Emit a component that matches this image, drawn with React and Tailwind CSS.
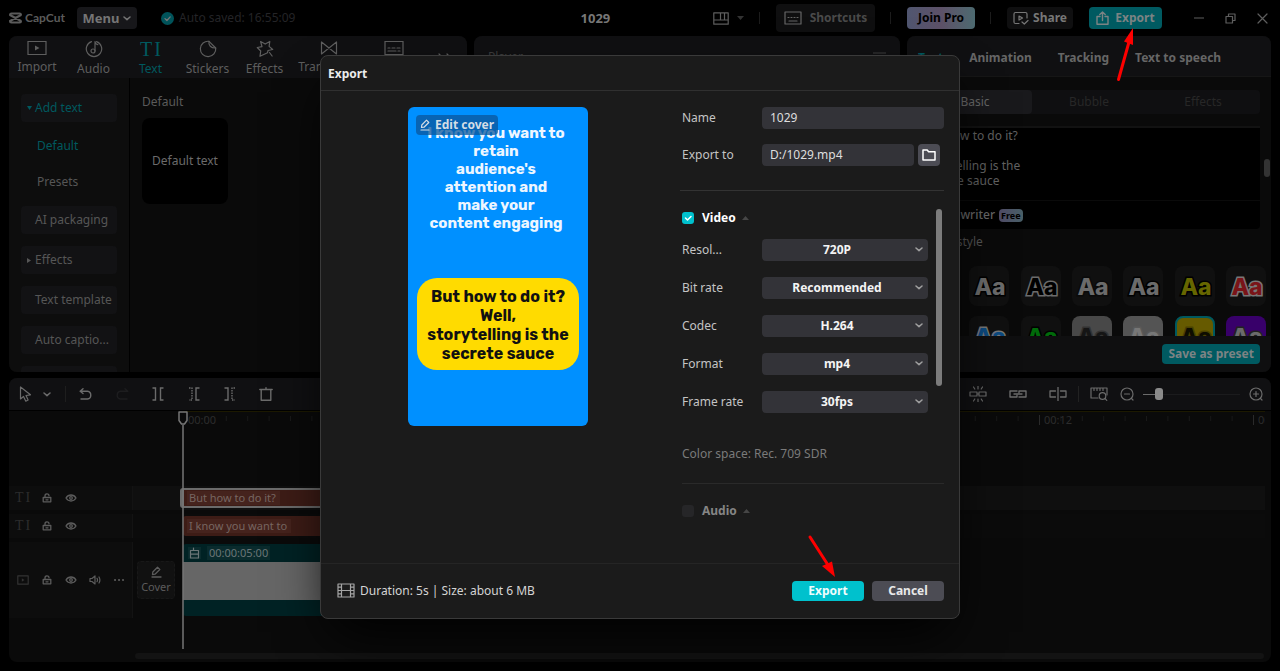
import React from "react";

function Svg({ w, h, className = "", children, sw = 1.2 }) {
  return (
    <svg
      width={w}
      height={h}
      viewBox={`0 0 ${w} ${h}`}
      fill="none"
      stroke="currentColor"
      strokeWidth={sw}
      strokeLinejoin="round"
      strokeLinecap="round"
      className={"shrink-0 " + className}
      aria-hidden="true"
    >
      {children}
    </svg>
  );
}

const ChevronDown = ({ className }) => (
  <Svg w={8} h={5} sw={1.5} className={className}>
    <path d="M1 1 4 3.6 7 1" />
  </Svg>
);

const Glyph = ({ className = "" }) => (
  <span className={"flex gap-0.5 font-['Liberation_Serif',serif] leading-none " + className}>
    <span>T</span>
    <span>I</span>
  </span>
);

const icons = {
  import: (
    <Svg w={20} h={16}>
      <path d="M1 1.5h18v13H1z" strokeLinejoin="miter" />
      <path d="M8 5.5 12.5 8 8 10.5z" fill="currentColor" stroke="none" />
    </Svg>
  ),
  audio: (
    <Svg w={18} h={18}>
      <path d="M6.5 1.6a7.7 7.7 0 1 0 5 0" />
      <circle cx="8" cy="11" r="2" />
      <path d="M10 11V1.5c.2 2 1.2 3 2.8 3.2" />
    </Svg>
  ),
  stickers: (
    <Svg w={18} h={18}>
      <path d="M10 1.3A7.7 7.7 0 1 0 16.7 8L10 1.3z" />
      <path d="M10 1.3c-.8 4 2 7 6.7 6.7" />
    </Svg>
  ),
  effects: (
    <Svg w={18} h={18}>
      <path d="M11.500 12.800 8.300 14.200 4 16.300 4.700 11 1.300 7.500 6 6.600 4.600 1.500 9.200 4.100 13.800 1.500 13.100 6.400 16.700 9.500 12 10.500z" />
      <path d="m13.500 12.500 2.600 3.500" />
    </Svg>
  ),
  transitions: (
    <Svg w={18} h={16}>
      <path d="M1.500 2v12L16.500 2v12L1.500 2z" />
    </Svg>
  ),
  captions: (
    <Svg w={20} h={16}>
      <path d="M1 1.500h18v13H1z" strokeLinejoin="miter" />
      <path d="M4 8h2M8 8h3M13 8h3M4 11h8M14 11h2" />
    </Svg>
  ),
};

const Lock = () => (
  <Svg w={10} h={10} sw={1.3}>
    <path d="M1.200 4.500h7.600v4.300H1.200zM3 4.500V3a2 2 0 0 1 4-.3M4 6.800h2" />
  </Svg>
);
const Eye = () => (
  <Svg w={12} h={10} sw={1.3}>
    <path d="M1 5c2.500-4 7.500-4 10 0-2.500 4-7.500 4-10 0z" />
    <circle cx="6" cy="5" r="1.300" />
  </Svg>
);
const Speaker = () => (
  <Svg w={12} h={10} sw={1.2}>
    <path d="M1 3.500h2L6 1v8L3 6.500H1zM8 3.300q1 1.700 0 3.400M10 2q1.800 3 0 6" />
  </Svg>
);

function IconButton({ label, children, className = "" }) {
  return (
    <button type="button" aria-label={label} className={"flex items-center justify-center " + className}>
      {children}
    </button>
  );
}

const Divider = () => <span className="mr-4 ml-[15px] h-3 w-px bg-[#1c1c1c]" />;

function TopBar() {
  return (
    <header className="flex h-9 shrink-0 items-center bg-black pr-3 pl-[9px]">
      <div className="flex basis-[45%] items-center">
        <Svg w={13} h={12} sw={2} className="text-[#5b5b5b]">
          <path d="M12 3.500V3Q12 1.500 10.500 1.500h-8Q1 1.500 1 3l11 6M12 8.500V9q0 1.500-1.500 1.500h-8Q1 10.500 1 9l11-6" strokeLinecap="butt" />
        </Svg>
        <span className="ml-[3px] w-[38px] font-['Lato',sans-serif] text-[12px] font-bold text-[#5b5b5b]">CapCut</span>
        <button type="button" className="ml-3.5 flex h-[22px] w-[60px] items-center justify-center gap-1 rounded bg-[#17171a] text-[13px] font-bold text-[#757575]">
          Menu
          <ChevronDown />
        </button>
        <Svg w={13} h={13} sw={1.3} className="ml-6 text-[#777]">
          <circle cx="6.500" cy="6.500" r="6.500" fill="#00535a" stroke="none" />
          <path d="m4 6.600 1.900 1.900 3.300-3.600" />
        </Svg>
        <span className="ml-[5px] text-[#242427]">Auto saved: 16:55:09</span>
      </div>
      <h1 className="pl-[5px] text-[13px] font-bold text-[#777]">1029</h1>
      <div className="ml-auto flex items-center text-[#5e5e5e]">
        <IconButton label="Layout" className="gap-2">
          <Svg w={16} h={13}>
            <path d="M.8.800h14.400v11.400H.8zM.8 8h14.400M7.500.800V8M11.500.800V8" />
          </Svg>
          <Svg w={7} h={4} className="text-[#333]">
            <path d="M0 0h7L3.500 4z" fill="currentColor" stroke="none" />
          </Svg>
        </IconButton>
        <Divider />
        <button type="button" className="flex h-7 w-[99px] items-center justify-center gap-2 rounded bg-[#0f0f10] font-bold text-[#4a4a4a]">
          <Svg w={18} h={14} className="text-[#666]">
            <path d="M1 1h16v12H1zM4 6.500h1M7 6.500h1M10 6.500h1M13 6.500h1M5 10h8" />
          </Svg>
          Shortcuts
        </button>
        <Divider />
        <button type="button" className="h-[22px] w-[68px] rounded bg-linear-to-r from-[#505670] via-[#5d5168] to-[#4c6a70] font-bold text-black">
          Join Pro
        </button>
        <Divider />
        <button type="button" className="flex h-[22px] w-[66px] items-center justify-center gap-1 rounded bg-[#0f0f10] font-bold text-[#777]">
          <Svg w={16} h={14}>
            <path d="M6 12.500H2.500Q1 12.500 1 11V3q0-1.500 1.500-1.500h10Q14 1.500 14 3v4M6 5l3.500 2L6 9zM9 11l2.300 2L15 9.500" />
          </Svg>
          Share
        </button>
        <div className="relative ml-4">
          <button type="button" className="flex h-[22px] w-[73px] items-center justify-center gap-1.5 rounded bg-[#005a61] font-bold text-[#7c8384]">
            <Svg w={13} h={14} sw={1.4}>
              <path d="M4 5.500H1v7.700h11V5.500H9M6.500 9.500V1M3.800 3.500 6.500.900l2.700 2.600" />
            </Svg>
            Export
          </button>
          <svg width="20" height="56" viewBox="0 0 20 56" className="absolute top-5 left-[26px] z-10" aria-hidden="true">
            <path d="M3.500 52.500 14 15" stroke="#fe0000" strokeWidth="3" strokeLinecap="round" />
            <path d="M18 1 18 18 9 14.500z" fill="#fe0000" />
          </svg>
        </div>
        <IconButton label="Minimise" className="ml-8">
          <Svg w={10} h={10}>
            <path d="M0 5h10" />
          </Svg>
        </IconButton>
        <IconButton label="Restore" className="ml-[21px]">
          <Svg w={11} h={11}>
            <path d="M1 3.500h6.500V10H1zM3.500 3.300V1H10v6.500H7.700" />
          </Svg>
        </IconButton>
        <IconButton label="Close" className="ml-[21px]">
          <Svg w={11} h={11}>
            <path d="m1 1 9 9M10 1l-9 9" />
          </Svg>
        </IconButton>
      </div>
    </header>
  );
}

const tabs = [
  ["Import", "import"],
  ["Audio", "audio"],
  ["Text", "text"],
  ["Stickers", "stickers"],
  ["Effects", "effects"],
  ["Transitions", "transitions"],
  ["Captions", "captions"],
];

function MediaPanel() {
  const box = "mb-3 flex h-7 shrink-0 items-center rounded bg-[#121214] pl-3.5 text-left relative";
  return (
    <section className="flex min-h-0 w-[458px] shrink-0 flex-col overflow-hidden rounded-lg bg-[#0a0a0a]">
      <nav className="flex h-[42px] shrink-0 bg-[#101012]">
        {tabs.map(([name, icon]) => (
          <button
            key={name}
            type="button"
            className={
              "flex shrink-0 flex-col items-center pt-1 " +
              (name === "Transitions" ? "w-[72px] " : name === "Import" ? "w-14 " : "w-[57px] ") +
              (name === "Text" ? "text-[#00595f]" : "text-[#5e5e5e]")
            }
          >
            <span className="flex h-[18px] items-center">{icons[icon] || <Glyph className="text-[20px]" />}</span>
            <span className="leading-[22px]">{name}</span>
          </button>
        ))}
        <IconButton label="More" className="ml-4 text-[#5e5e5e]">
          <Svg w={14} h={8}>
            <path d="m1 1 3 3-3 3M9 1l3 3-3 3" />
          </Svg>
        </IconButton>
      </nav>
      <div className="flex min-h-0 flex-1">
        <div className="flex w-[121px] shrink-0 flex-col overflow-hidden border-r border-black bg-[#0d0d0d] pt-4 pr-3 pl-3 text-[#565656]">
          <button type="button" className="relative mb-1.5 flex h-7 shrink-0 items-center rounded bg-[#121214] pl-3.5 text-[#00595f]">
            <Svg w={5} h={4} className="absolute left-1.5">
              <path d="M0 0h5L2.500 4z" fill="currentColor" stroke="none" />
            </Svg>
            Add text
          </button>
          <button type="button" className="h-9 shrink-0 pl-4 text-left text-[#00595f]">Default</button>
          <button type="button" className="mb-1.5 h-9 shrink-0 pl-4 text-left">Presets</button>
          <button type="button" className={box}>AI packaging</button>
          <button type="button" className={box}>
            <Svg w={4} h={5} className="absolute left-1.5">
              <path d="M0 0v5l4-2.500z" fill="currentColor" stroke="none" />
            </Svg>
            Effects
          </button>
          <button type="button" className={box + " whitespace-nowrap"}>Text template</button>
          <button type="button" className={box}>Auto captio...</button>
          <span className={box} />
        </div>
        <div className="flex-1 pt-3.5 pl-3 text-[#5a5a5a]">
          <h2 className="leading-5">Default</h2>
          <button type="button" className="mt-1.5 flex h-[86px] w-[86px] items-center justify-center rounded-lg bg-black whitespace-nowrap text-[#6b6b6b]">
            Default text
          </button>
        </div>
      </div>
    </section>
  );
}

const swatches = [
  ["bg-[#101010]", "#6b6b6b", "#000"],
  ["bg-[#101010]", "#6b6b6b", "#000"],
  ["bg-[#101010]", "#000", "#6b6b6b"],
  ["bg-[#101010]", "#6b6b6b", "#0a0a0a"],
  ["bg-[#101010]", "#6b6b6b", "#000"],
  ["bg-[#101010]", "#666600", "#000"],
  ["bg-[#101010]", "#7a1418", "#777"],
  ["bg-[#101010]", "#6b6b6b", "#000"],
  ["bg-[#101010]", "#0c4a80", "#777"],
  ["bg-[#101010]", "#006a0a", "#000"],
  ["bg-[#484848]", "#151515", "#333"],
  ["bg-[#545454]", "#777", "#5a5a5a"],
  ["bg-[#665a00] border-2 border-[#00595f]", "#0d0c00", "#4a4200"],
  ["bg-[#38006a]", "#6b6b6b", "#222"],
];

function TextPanel() {
  return (
    <section className="flex min-h-0 w-[364px] shrink-0 flex-col overflow-hidden rounded-lg bg-[#0a0a0a] text-[#666]">
      <nav className="flex h-[41px] shrink-0 items-center gap-[26px] border-b border-[#161616] bg-[#101012] pt-1 pl-[11px] font-bold whitespace-nowrap">
        <button type="button" className="text-[#00595f]">Text</button>
        <button type="button">Animation</button>
        <button type="button">Tracking</button>
        <button type="button">Text to speech</button>
      </nav>
      <div className="relative min-h-0 flex-1 overflow-hidden pr-[11px] pl-[11px]">
        <div className="mt-[13px] flex h-6 rounded bg-[#0f0f11] text-[#272727]">
          <button type="button" className="flex-1 rounded bg-[#19191c] text-[#666]">Basic</button>
          <button type="button" className="flex-1">Bubble</button>
          <button type="button" className="flex-1">Effects</button>
        </div>
        <textarea
          aria-label="Text content"
          className="mt-3 block h-[74px] w-full resize-none overflow-hidden border-t-2 border-[#121212] bg-black pl-[5px] leading-[15px] text-[#626262] outline-none"
          defaultValue={"But how to do it?\nWell,\nstorytelling is the\nsecrete sauce"}
        />
        <div className="mt-px flex h-7 items-center rounded-b bg-black pl-4">
          <span className="w-[61px] text-right font-medium">AI writer</span>
          <span className="ml-1 rounded bg-linear-to-r from-[#4f4b66] to-[#496068] px-0.5 text-[9px] leading-[13px] font-bold text-black">Free</span>
        </div>
        <h3 className="mt-[3px] leading-5 text-[#555]">Preset style</h3>
        <div className="mt-3.5 -mr-1.5 grid grid-cols-[repeat(7,40px)] justify-between gap-y-2.5">
          {swatches.map(([bg, fill, line], i) => (
            <button key={i} type="button" aria-label={"Preset " + (i + 1)} className={"flex h-10 w-10 items-center justify-center overflow-hidden rounded-lg " + bg}>
              <svg width="40" height="26" viewBox="0 0 40 26" className="shrink-0" aria-hidden="true">
                <text x="21" y="22" textAnchor="middle" className="font-['Inter',sans-serif] text-[23px] font-extrabold" fill={fill} stroke={line} strokeWidth="3" paintOrder="stroke" strokeLinejoin="miter">
                  Aa
                </text>
              </svg>
            </button>
          ))}
        </div>
        <span className="absolute top-[82px] right-[1px] h-[18px] w-1.5 rounded-full bg-[#333]" />
      </div>
      <div className="flex h-9 shrink-0 items-center justify-end bg-[#0f0f10] pr-[11px]">
        <button type="button" className="h-5 rounded bg-[#005a61] px-1.5 font-bold text-[#7c8384]">Save as preset</button>
      </div>
    </section>
  );
}

function Toolbar() {
  return (
    <div className="flex h-8 shrink-0 items-center bg-[#101012] pr-2 pl-2.5 text-[#6b6b6b]">
      <IconButton label="Select" className="w-3">
        <Svg w={13} h={16}>
          <path d="M1.500 1v12l3-2.500 2.300 4.700 2.300-1.200L7 9.500l4.500-.7z" />
        </Svg>
      </IconButton>
      <IconButton label="Select options" className="ml-3">
        <ChevronDown />
      </IconButton>
      <span className="mr-0.5 ml-3.5 h-4 w-px bg-[#1e1e1e]" />
      <div className="flex">
        <IconButton label="Undo" className="h-8 w-9">
          <Svg w={14} h={12} sw={1.4}>
            <path d="M4 .800 1.200 3.300H8.500a3.900 3.900 0 0 1 0 7.700H2M1.200 3.300 4 5.500" />
          </Svg>
        </IconButton>
        <IconButton label="Redo" className="h-8 w-9 text-[#1d1d1f]">
          <Svg w={14} h={12} sw={1.4}>
            <path d="m10 .800 2.800 2.500H5.500a3.900 3.900 0 0 0 0 7.700H12" />
          </Svg>
        </IconButton>
        <IconButton label="Split" className="h-8 w-9">
          <Svg w={12} h={14} sw={1.4}>
            <path d="M1 1h2.500v12H1M11 1H8.500v12H11" strokeLinejoin="miter" />
          </Svg>
        </IconButton>
        <IconButton label="Delete left" className="h-8 w-9">
          <Svg w={12} h={14} sw={1.4}>
            <path d="M1 1h3v12H1" strokeDasharray="1.500 1" strokeLinecap="butt" />
            <path d="M11 1H8v12h3" strokeLinejoin="miter" />
          </Svg>
        </IconButton>
        <IconButton label="Delete right" className="h-8 w-9">
          <Svg w={12} h={14} sw={1.4}>
            <path d="M11 1H8v12h3" strokeDasharray="1.500 1" strokeLinecap="butt" />
            <path d="M1 1h3v12H1" strokeLinejoin="miter" />
          </Svg>
        </IconButton>
        <IconButton label="Delete" className="h-8 w-9">
          <Svg w={14} h={14} sw={1.4}>
            <path d="M.8 2.500h12.400M2.200 2.500v10.700h9.600V2.500M7 .800v1.500" />
          </Svg>
        </IconButton>
      </div>
      <div className="ml-auto flex items-center">
        <IconButton label="Magnet" className="w-10">
          <Svg w={18} h={16}>
            <path d="M8 6H1v4h7zM10 6h7v4h-7zM8 8h2M9 0v3M9 13v3M4.500 1l1.300 2M13.500 1l-1.300 2M4.500 15l1.300-2M13.500 15l-1.300-2" />
          </Svg>
        </IconButton>
        <IconButton label="Link" className="w-10">
          <Svg w={18} h={8} sw={1.4}>
            <path d="M8 1H1v6h7V5.500M10 7h7V1h-7v1.500M5 4h8" />
          </Svg>
        </IconButton>
        <IconButton label="Preview axis" className="w-10">
          <Svg w={18} h={14} sw={1.3}>
            <path d="M6.500 4H1v6h5.500M11.500 4H17v6h-5.500M9 0v14" />
          </Svg>
        </IconButton>
        <span className="h-4 w-px bg-[#222]" />
        <IconButton label="Fit timeline" className="ml-[11px]">
          <Svg w={18} h={14}>
            <path d="M8 11H1V1h16v7M4 1v2.500M7 1v2.500M10 1v2.500M13 1v2.500" />
            <circle cx="12.500" cy="9" r="3.300" />
            <path d="m15 11.500 1.800 1.800" />
          </Svg>
        </IconButton>
        <IconButton label="Zoom out" className="ml-3">
          <Svg w={14} h={14}>
            <circle cx="7" cy="7" r="6" />
            <path d="M4.500 7h5M11.500 11.500 13 13" />
          </Svg>
        </IconButton>
        <input
          type="range"
          aria-label="Timeline zoom"
          defaultValue="13"
          className="mx-[9px] h-3 w-[97px] appearance-none bg-transparent [&::-webkit-slider-runnable-track]:h-px [&::-webkit-slider-runnable-track]:bg-linear-to-r [&::-webkit-slider-runnable-track]:from-[#6b6b6b] [&::-webkit-slider-runnable-track]:from-15% [&::-webkit-slider-runnable-track]:to-[#1b1b1d] [&::-webkit-slider-runnable-track]:to-15% [&::-webkit-slider-thumb]:-mt-1.5 [&::-webkit-slider-thumb]:h-3 [&::-webkit-slider-thumb]:w-2 [&::-webkit-slider-thumb]:appearance-none [&::-webkit-slider-thumb]:rounded-[3px] [&::-webkit-slider-thumb]:bg-[#8a8a8a]"
        />
        <IconButton label="Zoom in">
          <Svg w={14} h={14}>
            <circle cx="7" cy="7" r="6" />
            <path d="M4.500 7h5M7 4.500v5M11.500 11.500 13 13" />
          </Svg>
        </IconButton>
      </div>
    </div>
  );
}

function Ruler() {
  return (
    <svg width="100%" height="18" className="block overflow-hidden text-[11px]" aria-hidden="true">
      {Array.from({ length: 51 }, (_, i) => (
        <path key={i} d={i % 10 ? `M${0.5 + i * 21.4} 4v5` : `M${0.5 + i * 21.4} 3v10`} stroke={i % 10 ? "#191919" : "#2a2a2a"} />
      ))}
      {["00:00", "00:03", "00:06", "00:09", "00:12", "00:15"].map((t, i) => (
        <text key={t} x={5 + i * 214} y="12" fill="#2c2c2c">
          {t}
        </text>
      ))}
    </svg>
  );
}

function Timeline() {
  const head = "flex w-[124px] shrink-0 items-center gap-2 border-r border-[#131313] bg-[#0d0d0d] pl-1.5 text-[#5c5c5c]";
  const icon = "flex w-4 justify-center";
  return (
    <section className="flex min-h-0 flex-[284] basis-0 flex-col overflow-hidden rounded-lg bg-[#0a0a0a]">
      <Toolbar />
      <div className="relative flex flex-1 flex-col border-t border-black">
        <div className="mr-1.5 ml-[174px] h-[75px] border-t border-[#1c1900]">
          <Ruler />
        </div>
        <div className="flex h-6">
          <div className={head}>
            <Glyph className="w-4 text-[14px] text-[#2c2c2c]" />
            <span className={icon}><Lock /></span>
            <span className={icon}><Eye /></span>
          </div>
          <div className="mr-1.5 flex flex-1 items-center bg-[#0f0f0f] pl-[47px]">
            <div className="flex h-5 w-[360px] items-center rounded-[3px] border-2 border-l-4 border-[#6b6b6b] bg-[#3d1c16] pl-[3px] text-[11px]">
              <span className="bg-[#45231d] pr-1 pl-0.5 leading-[14px] text-[#776661]">But how to do it?</span>
            </div>
          </div>
        </div>
        <div className="mt-1 flex h-6">
          <div className={head}>
            <Glyph className="w-4 text-[14px] text-[#2c2c2c]" />
            <span className={icon}><Lock /></span>
            <span className={icon}><Eye /></span>
          </div>
          <div className="mr-1.5 flex flex-1 items-center bg-[#0b0b0b] pl-[50px]">
            <div className="flex h-5 w-[357px] items-center rounded-[3px] bg-[#3d1c16] pl-1 text-[11px]">
              <span className="bg-[#45231d] pr-1 pl-0.5 leading-[14px] text-[#776661]">I know you want to</span>
            </div>
          </div>
        </div>
        <div className="mt-1 flex h-[76px]">
          <div className={head}>
            <span className="flex w-4 justify-center text-[#333]">
              <Svg w={12} h={10}>
                <path d="M.8.800h10.400v8.400H.8z" />
                <path d="M4.800 3.300 7.500 5 4.800 6.700z" fill="currentColor" stroke="none" />
              </Svg>
            </span>
            <span className={icon}><Lock /></span>
            <span className={icon}><Eye /></span>
            <span className={icon}><Speaker /></span>
            <span className={icon}>
              <Svg w={10} h={2} sw={2}>
                <path d="M1 1h.1M5 1h.1M9 1h.1" />
              </Svg>
            </span>
          </div>
          <div className="mr-1.5 flex flex-1 items-center pl-1">
            <button type="button" className="mr-2 flex h-[38px] w-[38px] shrink-0 flex-col items-center justify-center gap-0.5 rounded border border-dashed border-[#181818] bg-[#111] text-[11px] leading-[14px] text-[#5c5c5c]">
              <Svg w={11} h={12} sw={1.3}>
                <path d="M1.500 8.500 1.800 6 6.500 1.200 8.800 3.500 4 8.200zM1 11h9" />
              </Svg>
              Cover
            </button>
            <div className="w-[357px] overflow-hidden rounded-[3px] bg-[#002224]">
              <div className="flex h-[18px] items-center gap-1.5 pl-[5px] text-[11px] leading-[14px] text-[#6b7677]">
                <Svg w={13} h={12} className="bg-[#0a2b2d]">
                  <path d="M2.500 3.500h8V11h-8zM2.500 7.200h8M5.500 3.500V1.200" />
                </Svg>
                <span className="bg-[#0a2b2d] px-0.5">00:00:05:00</span>
              </div>
              <div className="h-[38px] bg-[#666]" />
              <div className="h-4" />
            </div>
          </div>
        </div>
        <div className="mt-auto mr-[7px] mb-[3px] ml-[126px] h-1.5 rounded-full bg-[#131313]" />
        <svg width="12" height="239" viewBox="0 0 12 239" className="absolute top-0 left-[168px]" fill="none" stroke="#767676" aria-hidden="true">
          <path d="M6 14v224" strokeWidth="1.500" />
          <path d="M2 1h8v8.500L7.500 13h-3L2 9.500z" strokeWidth="1.500" fill="#0a0a0a" strokeLinejoin="round" />
        </svg>
      </div>
    </section>
  );
}

const fields = [
  ["resolution", "Resol...", "720P"],
  ["bitrate", "Bit rate", "Recommended"],
  ["codec", "Codec", "H.264"],
  ["format", "Format", "mp4"],
  ["framerate", "Frame rate", "30fps"],
];

function CheckRow({ id, label, checked, className }) {
  return (
    <div className={"flex items-center font-bold " + className}>
      <span className="relative flex h-3 w-3">
        <input id={id} type="checkbox" defaultChecked={checked} className="h-3 w-3 appearance-none rounded-[3px] bg-[#262628] checked:bg-[#00c1cd]" />
        {checked && (
          <Svg w={12} h={12} sw={1.5} className="pointer-events-none absolute inset-0 text-white">
            <path d="m3.500 6 2 2L9 4.500" />
          </Svg>
        )}
      </span>
      <label htmlFor={id} className="ml-2 leading-5">{label}</label>
      <Svg w={7} h={4} className="ml-1.5 text-[#464646]">
        <path d="M0 4h7L3.500 0z" fill="currentColor" stroke="none" />
      </Svg>
    </div>
  );
}

function ExportDialog() {
  return (
    <div role="dialog" aria-labelledby="export-title" className="flex w-[640px] max-w-full flex-col rounded-lg border border-[#3a3a3a] bg-[#1b1b1b] text-[#c4c4c4] shadow-2xl shadow-black">
      <h2 id="export-title" className="flex h-[35px] shrink-0 items-center border-b border-[#303030] pt-0.5 pl-[7px] font-bold text-[#ececec]">Export</h2>
      <div className="flex h-[472px]">
        <div className="flex w-[354px] shrink-0 justify-center pt-4">
          <div className="relative h-[319px] w-[180px] rounded-md bg-[#0090ff] px-2 pt-[17px] text-center font-['Rubik','Inter',sans-serif] font-bold">
            <p className="pr-1 text-[15px] leading-[18px] text-[#edf6ff]">
              I know you want to<br />retain<br />audience's<br />attention and<br />make your<br />content engaging
            </p>
            <p className="mx-px mt-[46px] rounded-[20px] bg-[#ffdb00] pt-[9px] pb-[7px] text-[16px] leading-[19px] whitespace-nowrap text-[#111]">
              But how to do it?<br />Well,<br />storytelling is the<br />secrete sauce
            </p>
            <button type="button" className="absolute top-2 left-2 flex h-5 items-center gap-1 rounded bg-[#0b559b]/75 px-1 font-['Noto_Sans',sans-serif] text-[12px] font-bold text-[#d3dde6]">
              <Svg w={11} h={12}>
                <path d="M1.500 8.500 1.800 6 6.500 1.200 8.800 3.500 4 8.200zM1 11h8" />
              </Svg>
              Edit cover
            </button>
          </div>
        </div>
        <div className="min-w-0 flex-1 pt-4 pr-[15px] pl-[7px]">
          <div className="flex h-[22px] items-center">
            <label htmlFor="name" className="w-20">Name</label>
            <input id="name" type="text" defaultValue="1029" className="h-[22px] min-w-0 flex-1 rounded bg-[#333338] px-2 text-[#dedede] outline-none" />
          </div>
          <div className="mt-[15px] flex h-[22px] items-center pr-1">
            <label htmlFor="path" className="w-20">Export to</label>
            <input id="path" type="text" defaultValue="D:/1029.mp4" className="h-[22px] min-w-0 flex-1 rounded bg-[#333338] px-2 text-[#dedede] outline-none" />
            <IconButton label="Choose folder" className="ml-1 h-[22px] w-[22px] rounded bg-[#4c4c54] text-white">
              <Svg w={14} h={12} sw={1.5}>
                <path d="M1 1h4.200l1.400 1.800H13V11H1z" />
              </Svg>
            </IconButton>
          </div>
          <div className="mt-6 -ml-0.5 border-t border-[#333]" />
          <div className="relative mt-[17px]">
            <CheckRow id="video" label="Video" checked className="text-white" />
            {fields.map(([id, label, value], i) => (
              <div key={id} className={"flex h-[22px] items-center pr-4 " + (i ? "mt-4" : "mt-[11px]")}>
                <label htmlFor={id} className="w-20">{label}</label>
                <span className="relative flex flex-1 items-center">
                  <select id={id} defaultValue={value} className="h-[22px] w-full appearance-none rounded bg-[#333338] pr-4 text-center font-bold text-[#f4f4f4] [text-align-last:center]">
                    <option>{value}</option>
                  </select>
                  <ChevronDown className="pointer-events-none absolute right-[5px] text-[#a0a0a0]" />
                </span>
              </div>
            ))}
            <span className="absolute top-px right-0.5 h-[177px] w-1.5 rounded-full bg-[#7c7c7c]" />
          </div>
          <p className="mt-[31px] leading-5 text-[#7a7a7a]">Color space: Rec. 709 SDR</p>
          <div className="mt-[19px] border-t border-[#2a2a2a]" />
          <CheckRow id="audio" label="Audio" className="mt-[17px] text-[#858585]" />
        </div>
      </div>
      <footer className="flex h-[55px] items-center border-t border-[#252525] pr-[15px] pl-4">
        <Svg w={18} h={15} className="mr-[5px] text-[#a5a5a5]">
          <path d="M1 1h16v13H1zM4.500 1v13M13.500 1v13M4.500 7.500h9M1 4.200h3.500M1 7.500h3.500M1 10.800h3.500M13.500 4.200H17M13.500 7.500H17M13.500 10.800H17" />
        </Svg>
        <span className="text-[#d4d4d4]">Duration: 5s | Size: about 6 MB</span>
        <div className="relative ml-auto">
          <button type="button" className="block h-5 w-[72px] rounded bg-[#00c1cd] font-bold text-[#f0fdfd]">Export</button>
          <svg width="32" height="48" viewBox="0 0 32 48" className="absolute -top-[48px] left-[14px]" aria-hidden="true">
            <path d="M4 4 22 32" stroke="#fe0000" strokeWidth="3" strokeLinecap="round" />
            <path d="M29 44 16 33 26 28.500z" fill="#fe0000" />
          </svg>
        </div>
        <button type="button" className="ml-2 h-5 w-[72px] rounded bg-[#4c4c54] font-bold text-[#e8e8e8]">Cancel</button>
      </footer>
    </div>
  );
}

export default function App() {
  return (
    <div className="relative flex h-screen min-h-[600px] flex-col overflow-hidden bg-black pb-[9px] font-['Noto_Sans','Noto_Sans_CJK_SC',sans-serif] text-[12px] leading-5">
      <TopBar />
      <div className="mr-[9px] mb-1.5 ml-[9px] flex min-h-0 flex-[336] basis-0 gap-[7px]">
        <MediaPanel />
        <section className="flex min-w-0 flex-1 flex-col overflow-hidden rounded-lg bg-[#0a0a0a]">
          <div className="flex h-[42px] items-center justify-between bg-[#101012] px-3.5 text-[#3c3c3c]">
            <span>Player</span>
            <IconButton label="Player menu">
              <Svg w={13} h={10}>
                <path d="M0 1h13M0 5h13M0 9h13" />
              </Svg>
            </IconButton>
          </div>
        </section>
        <TextPanel />
      </div>
      <div className="mx-[9px] flex min-h-0 flex-[284] basis-0 flex-col">
        <Timeline />
      </div>
      <div className="pointer-events-none absolute inset-0 flex items-center justify-center pt-0.5">
        <div className="pointer-events-auto">
          <ExportDialog />
        </div>
      </div>
    </div>
  );
}
